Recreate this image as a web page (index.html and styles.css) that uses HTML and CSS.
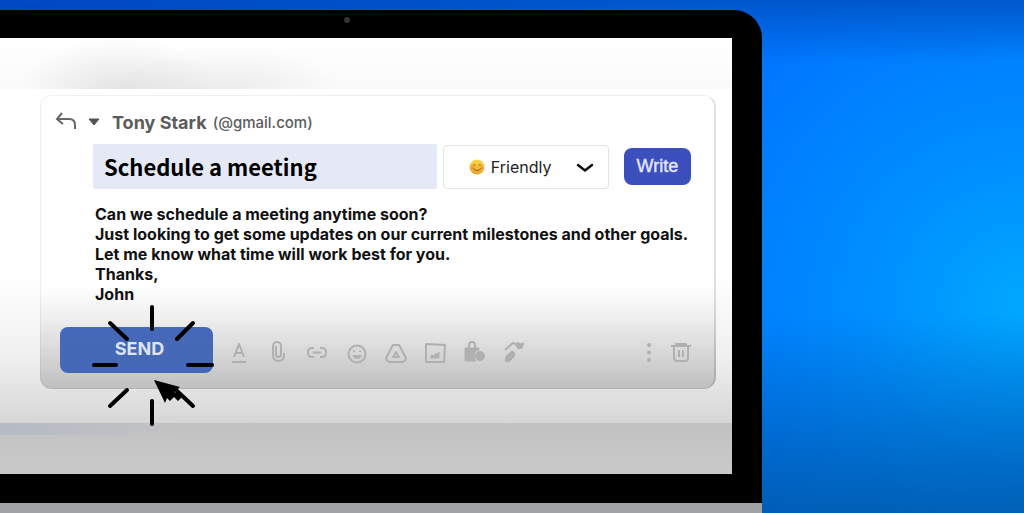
FILE: index.html
```html
<!DOCTYPE html>
<html lang="en">
<head>
    <meta charset="UTF-8">
    <meta name="viewport" content="width=device-width, initial-scale=1.0">
    <title>Schedule a meeting</title>
    <link rel="stylesheet" href="styles.css">
</head>
<body>
    <div class="laptop">
        <div class="bezel">
            <span class="camera"></span>
            <main class="screen">
                <div class="toolbar"></div>
                <div class="page">
                    <form class="card">
                        <div class="recipient">
                            <svg class="reply" width="22" height="20" viewBox="0 0 22 20"><path d="M7 1L2 7L8 12M2.500 7H14Q20 7 20 13V17"/></svg>
                            <svg class="caret" width="12" height="8" viewBox="0 0 12 8"><path d="M1 1H11L6 7Z"/></svg>
                            <strong class="name">Tony Stark</strong>
                            <span class="email">(@gmail.com)</span>
                        </div>
                        <div class="subject-row">
                            <input class="subject" type="text" value="Schedule a meeting" aria-label="Subject">
                            <div class="tone">
                                <svg class="emoji" width="16" height="16" viewBox="0 0 16 16">
                                    <defs>
                                        <linearGradient id="face" x1="0" y1="0" x2="0" y2="1">
                                            <stop offset="0" stop-color="#fbd84b"/>
                                            <stop offset="1" stop-color="#eda32c"/>
                                        </linearGradient>
                                    </defs>
                                    <circle cx="8" cy="8" r="7.500" fill="url(#face)"/>
                                    <circle cx="3.200" cy="9" r="1.700" fill="#f08a3c" opacity=".6"/>
                                    <circle cx="12.800" cy="9" r="1.700" fill="#f08a3c" opacity=".6"/>
                                    <path d="M4 6.500Q5.200 4.500 6.400 6.500M9.600 6.500Q10.800 4.500 12 6.500M4.200 9.500Q8 14 11.800 9.500" fill="none" stroke="#9a6420" stroke-width="1" stroke-linecap="round"/>
                                </svg>
                                <select class="tone-select" aria-label="Tone">
                                    <option>Friendly</option>
                                </select>
                                <svg class="chevron" width="18" height="10" viewBox="0 0 18 10"><path d="M2 2L9 7.500L16 2"/></svg>
                            </div>
                            <button class="write" type="button">Write</button>
                        </div>
                        <textarea class="message" rows="5" aria-label="Message">Can we schedule a meeting anytime soon?
Just looking to get some updates on our current milestones and other goals.
Let me know what time will work best for you.
Thanks,
John</textarea>
                        <div class="actions">
                            <div class="send-wrap">
                                <button class="send" type="button">SEND</button>
                                <svg class="burst" width="124" height="124" viewBox="0 0 124 124">
                                    <path class="rays" d="M62 4V26M62 98V121M4 62H26M98 62H122M20 20L37 36M103 20L87 36M37 87L20 103M86 87L103 103"/>
                                    <path d="M64 77L90 84L84 89L94 92L88 98L84 94L80 98L77 95L75 100Z"/>
                                </svg>
                            </div>
                            <div class="tools">
                                <button class="tool" type="button" aria-label="Formatting"><svg viewBox="0 0 24 24"><path d="M7 17L12 4L17 17M9 13H15M5 22H19"/></svg></button>
                                <button class="tool" type="button" aria-label="Attach file"><svg viewBox="0 0 24 24"><path d="M15 7V14Q15 17 12.500 17Q10 17 10 14V6M15 7Q15 2 11 2Q7 2 7 7V15Q7 21 12.500 21Q18 21 18 15V13"/></svg></button>
                                <button class="tool" type="button" aria-label="Insert link"><svg viewBox="0 0 24 24"><path d="M9 8H7Q3 8 3 12.500Q3 17 7 17H9M15 8H17Q21 8 21 12.500Q21 17 17 17H15M8 12.500H16"/></svg></button>
                                <button class="tool" type="button" aria-label="Insert emoji"><svg viewBox="0 0 24 24"><circle cx="13" cy="14" r="8.500"/><path d="M10 10.500V12M16 10.500V12M9.500 16H16.500Q13 20 9.500 16Z"/></svg></button>
                                <button class="tool" type="button" aria-label="Insert from drive"><svg viewBox="0 0 24 24"><path d="M10 5H16L23 18Q22 22 19 22H7Q4 22 3 18ZM13 12L16 17H10Z"/></svg></button>
                                <button class="tool" type="button" aria-label="Insert photo"><svg viewBox="0 0 24 24"><path d="M4 4L23 5L22 22H4Z"/><path class="solid thin" d="M9 18V15L12 16L14 13L15 15L17 12V18Z"/></svg></button>
                                <button class="tool" type="button" aria-label="Confidential mode"><svg viewBox="0 0 24 24"><path d="M8 8V5Q8 2 11 2Q14 2 14 5V8"/><path class="solid thin" d="M4 8H18V10Q13 11 13 16Q13 19 15 21H4Z"/><circle class="solid thin" cx="19" cy="16" r="4.500"/></svg></button>
                                <button class="tool" type="button" aria-label="Signature"><svg viewBox="0 0 24 24"><path d="M5 10L13 3L18 5"/><path class="solid thin" d="M16 6L18 2L20 4L24 3L22 8L18 9ZM6 16L12 11L15 13L14 17L9 22L5 21Z"/></svg></button>
                            </div>
                            <div class="tools">
                                <button class="tool" type="button" aria-label="More options"><svg viewBox="0 0 24 24"><path class="dots" d="M12 5V5.100M12 12.500V12.600M12 20V20.100"/></svg></button>
                                <button class="tool" type="button" aria-label="Discard draft"><svg viewBox="0 0 24 24"><path d="M2 6H22M7 5V4H17V5M5 7V18Q5 21 8 21H16Q19 21 19 18V7M10 10V17M14 10V17"/></svg></button>
                            </div>
                        </div>
                    </form>
                </div>
                <div class="dock"></div>
            </main>
        </div>
        <div class="base"></div>
    </div>
</body>
</html>
```
FILE: styles.css
```css
* {
    box-sizing: border-box;
}

body {
    margin: 0;
    min-height: 100vh;
    overflow: hidden;
    font-family: Inter, sans-serif;
    background:
        linear-gradient(180deg, rgba(0, 80, 190, 0.8), transparent 12%),
        linear-gradient(180deg, transparent 60%, rgba(0, 85, 160, 0.8) 100%),
        radial-gradient(ellipse 40% 75% at 100% 58%, #00a8ff 0%, rgba(0, 160, 255, 0.6) 40%, transparent 100%),
        linear-gradient(90deg, #0030d0, #0070ff 70%);
}

.laptop {
    width: 74.4%;
    padding-top: 10px;
}

.bezel {
    position: relative;
    padding: 28px 30px 29px 0;
    background: #000;
    border-radius: 0 28px 0 0;
}

.camera {
    position: absolute;
    top: 7px;
    left: 344px;
    width: 6px;
    height: 6px;
    border-radius: 50%;
    background: #333;
}

.base {
    height: 20px;
    background: #a0a3a3;
}

.screen {
    background: #fff;
}

.toolbar {
    height: 51px;
    background:
        radial-gradient(ellipse 100px 50px at 120px 100%, rgba(0, 0, 0, 0.09), transparent),
        radial-gradient(ellipse 110px 44px at 230px 100%, rgba(0, 0, 0, 0.06), transparent),
        linear-gradient(180deg, #fff, #fafafa);
}

.page {
    padding: 6px 16px 34px 40px;
    background: linear-gradient(180deg, #fff 55%, #f0f0f0 80%, #d6d6d6);
}

.card {
    padding: 14px 19px 15px;
    border: 1px solid rgba(0, 0, 0, 0.06);
    border-right: 2px solid rgba(0, 0, 0, 0.12);
    border-radius: 12px;
    background: linear-gradient(180deg, #fff 65%, #f0f0f0 75%, #bfbfbf) border-box;
}

.recipient {
    display: flex;
    align-items: center;
    height: 24px;
    color: #5c5c5c;
}

.reply {
    margin-left: -5px;
    fill: none;
    stroke: #666;
    stroke-width: 2;
}

.caret {
    margin: 0 12px 0 11px;
    fill: #555;
    stroke: #555;
    stroke-linejoin: round;
}

.name {
    font-size: 18px;
    font-weight: 700;
}

.email {
    margin-left: 6px;
    font-size: 15px;
    font-weight: 500;
}

.subject-row {
    display: flex;
    align-items: center;
    margin-top: 10px;
    padding: 0 4px 0 33px;
}

.subject {
    flex: 1;
    min-width: 0;
    height: 45px;
    padding: 0 11px 2px;
    border: 0;
    border-radius: 2px;
    background: #e5e9f5;
    color: #000;
    font: 700 22px "Noto Sans CJK JP", sans-serif;
}

.tone {
    position: relative;
    width: 166px;
    margin: 0 15px 0 6px;
}

.tone-select {
    display: block;
    width: 100%;
    height: 44px;
    padding: 0 0 0 47px;
    appearance: none;
    border: 1px solid #e2e2e4;
    border-radius: 4px;
    background: #fff;
    color: #222;
    font: 400 16px Inter, sans-serif;
}

.emoji {
    position: absolute;
    top: 14px;
    left: 26px;
    pointer-events: none;
}

.chevron {
    position: absolute;
    top: 18px;
    right: 15px;
    fill: none;
    stroke: #111;
    stroke-width: 2.5;
    stroke-linecap: round;
    stroke-linejoin: round;
    pointer-events: none;
}

.write {
    width: 67px;
    height: 37px;
    padding: 0;
    border: 0;
    border-radius: 8px;
    background: #3b50bd;
    color: #e4e8fa;
    font: 500 18px "Liberation Sans", sans-serif;
    -webkit-text-stroke: 0.4px #e4e8fa;
}

.message {
    display: block;
    width: calc(100% - 35px);
    margin: 15px 0 0 35px;
    padding: 0;
    border: 0;
    overflow: hidden;
    resize: none;
    background: transparent;
    color: #111;
    font: 700 16px/20px Inter, sans-serif;
    white-space: pre;
}

.actions {
    display: flex;
    align-items: center;
    margin-top: 23px;
}

.send-wrap {
    position: relative;
    margin-right: 12px;
}

.send {
    width: 153px;
    height: 46px;
    padding: 0 0 4px 6px;
    border: 0;
    border-radius: 8px;
    background: linear-gradient(180deg, #4568b8, #4468b6);
    color: #dde4f4;
    font: 700 18px Inter, sans-serif;
}

.burst {
    position: absolute;
    top: -24px;
    left: 30px;
    pointer-events: none;
}

.rays {
    fill: none;
    stroke: #000;
    stroke-width: 4;
    stroke-linecap: round;
}

.tools {
    display: flex;
    gap: 11px;
    padding-top: 4px;
}

.tools:last-child {
    margin-left: auto;
    gap: 4px;
}

.tool {
    width: 28px;
    height: 28px;
    padding: 2px;
    border: 0;
    background: none;
}

.tool svg {
    display: block;
    width: 24px;
    height: 24px;
    fill: none;
    stroke: #b0b0b0;
    stroke-width: 2;
    stroke-linejoin: round;
}

.tool .solid {
    fill: #b0b0b0;
}

.tool .thin {
    stroke-width: 1;
}

.tool .dots {
    stroke-width: 4;
    stroke-linecap: round;
}

.dock {
    height: 51px;
    background:
        linear-gradient(90deg, rgba(150, 165, 200, 0.3), transparent 25%) top / 100% 12px no-repeat,
        linear-gradient(180deg, #c2c2c2, #c9c9c9);
}
```
